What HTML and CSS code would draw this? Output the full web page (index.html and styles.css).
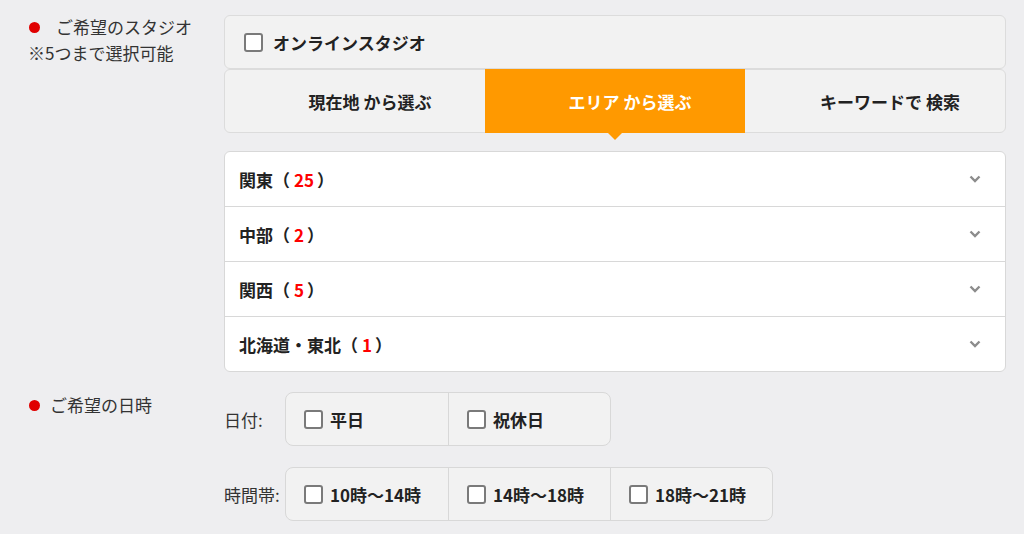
FILE: index.html
```html
<!DOCTYPE html>
<html lang="ja">
<head>
    <meta charset="UTF-8">
    <meta name="viewport" content="width=device-width, initial-scale=1.0">
    <title>スタジオ検索</title>
    <link rel="stylesheet" href="styles.css">
</head>
<body>
    <div class="search-form">
        <div class="form-row">
            <div class="row-label">
                <div class="label-title"><span class="dot"></span>ご希望のスタジオ</div>
                <div class="label-note">※5つまで選択可能</div>
            </div>
            <div class="row-body">
                <label class="online-box">
                    <span class="check"></span>
                    <span>オンラインスタジオ</span>
                </label>

                <div class="tabs">
                    <div class="tab">現在地 から選ぶ</div>
                    <div class="tab active">エリア から選ぶ</div>
                    <div class="tab">キーワードで 検索</div>
                </div>

                <div class="area-list">
                    <div class="area-item">
                        <span>関東（<em>25</em>）</span>
                        <svg class="chevron" width="12" height="8" viewBox="0 0 12 8"><path d="M1.5 1.5 L6 6 L10.5 1.5" fill="none" stroke="#8c8c8c" stroke-width="2.4"/></svg>
                    </div>
                    <div class="area-item">
                        <span>中部（<em>2</em>）</span>
                        <svg class="chevron" width="12" height="8" viewBox="0 0 12 8"><path d="M1.5 1.5 L6 6 L10.5 1.5" fill="none" stroke="#8c8c8c" stroke-width="2.4"/></svg>
                    </div>
                    <div class="area-item">
                        <span>関西（<em>5</em>）</span>
                        <svg class="chevron" width="12" height="8" viewBox="0 0 12 8"><path d="M1.5 1.5 L6 6 L10.5 1.5" fill="none" stroke="#8c8c8c" stroke-width="2.4"/></svg>
                    </div>
                    <div class="area-item">
                        <span>北海道・東北（<em>1</em>）</span>
                        <svg class="chevron" width="12" height="8" viewBox="0 0 12 8"><path d="M1.5 1.5 L6 6 L10.5 1.5" fill="none" stroke="#8c8c8c" stroke-width="2.4"/></svg>
                    </div>
                </div>
            </div>
        </div>

        <div class="form-row date-row">
            <div class="row-label">
                <div class="label-title short"><span class="dot"></span>ご希望の日時</div>
            </div>
            <div class="row-body">
                <div class="option-line">
                    <div class="option-label">日付:</div>
                    <div class="option-group">
                        <label class="option"><span class="check"></span>平日</label>
                        <label class="option"><span class="check"></span>祝休日</label>
                    </div>
                </div>
                <div class="option-line">
                    <div class="option-label">時間帯:</div>
                    <div class="option-group">
                        <label class="option"><span class="check"></span>10時～14時</label>
                        <label class="option"><span class="check"></span>14時～18時</label>
                        <label class="option"><span class="check"></span>18時～21時</label>
                    </div>
                </div>
            </div>
        </div>
    </div>
</body>
</html>
```

FILE: styles.css
```css
body {
    margin: 0;
    background: #eeeef0;
    font-family: "Noto Sans CJK JP", "Noto Sans", sans-serif;
    font-size: 17px;
    color: #333;
}
.search-form {
    padding: 15px 18px 0 0;
}
.form-row {
    display: grid;
    grid-template-columns: 224px 1fr;
}
.date-row {
    margin-top: 20px;
}
.row-label {
    padding-left: 29px;
}
.label-title {
    display: flex;
    align-items: center;
    height: 24px;
    line-height: 24px;
}
.label-title.short {
    margin-top: 1px;
}
.dot {
    width: 11px;
    height: 11px;
    border-radius: 50%;
    background: #e00000;
    margin-right: 16px;
}
.label-title.short .dot {
    margin-right: 10px;
}
.label-note {
    margin-top: 2px;
    line-height: 24px;
    margin-left: -1px;
}
.check {
    display: inline-block;
    box-sizing: border-box;
    width: 19px;
    height: 19px;
    border: 2px solid #7a7a7a;
    border-radius: 3px;
    background: white;
    flex-shrink: 0;
}
.online-box {
    display: flex;
    align-items: center;
    gap: 10px;
    height: 54px;
    box-sizing: border-box;
    padding-left: 19px;
    background: #f2f2f2;
    border: 1px solid #dcdcdc;
    border-radius: 6px;
    font-weight: bold;
    color: #222;
}
.tabs {
    display: flex;
    height: 64px;
    box-sizing: border-box;
    background: #f2f2f2;
    border: 1px solid #dcdcdc;
    border-radius: 6px;
}
.tab {
    flex: 1;
    display: flex;
    align-items: center;
    justify-content: center;
    padding-left: 30px;
    font-weight: bold;
    color: #222;
    position: relative;
}
.tab.active {
    background: #ff9900;
    color: white;
    margin: -1px 0;
}
.tab.active::after {
    content: "";
    position: absolute;
    left: 50%;
    bottom: -7px;
    margin-left: -7px;
    border-left: 7px solid transparent;
    border-right: 7px solid transparent;
    border-top: 7px solid #ff9900;
}
.area-list {
    margin-top: 18px;
    background: white;
    border: 1px solid #d8d8d8;
    border-radius: 6px;
}
.area-item {
    display: flex;
    align-items: center;
    justify-content: space-between;
    height: 54px;
    padding: 0 24px 0 14px;
    font-weight: bold;
    color: #222;
    border-top: 1px solid #d8d8d8;
}
.area-item:first-child {
    border-top: none;
}
/* count inside the full-width brackets */
.area-item em {
    font-style: normal;
    color: #ff0000;
    margin: 0 3px 0 4px;
}
.option-line {
    display: flex;
    align-items: center;
    margin-bottom: 21px;
}
.option-label {
    width: 61px;
}
.option-group {
    display: flex;
    height: 54px;
    box-sizing: border-box;
    background: #f2f2f2;
    border: 1px solid #d8d8d8;
    border-radius: 8px;
}
.option {
    display: flex;
    align-items: center;
    gap: 7px;
    width: 162px;
    padding-left: 18px;
    box-sizing: border-box;
    font-weight: bold;
    color: #222;
    border-left: 1px solid #d8d8d8;
}
.option:first-child {
    border-left: none;
}
```
